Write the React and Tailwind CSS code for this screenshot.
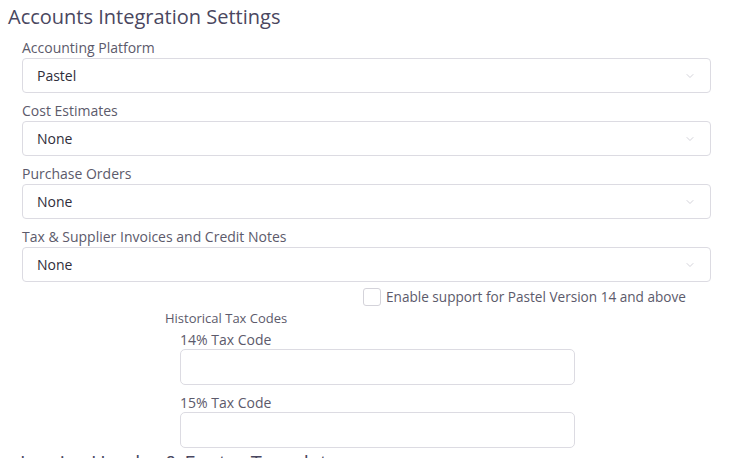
import { ChevronDown } from "lucide-react";

const SelectField = ({ label, value }) => (
  <div className="flex flex-col">
    <label className="h-[20px] text-[14px] leading-[20px] text-[#5c5a6b]">{label}</label>
    <div className="flex h-[35px] items-center justify-between rounded-[4px] border border-[#dcdbe2] bg-white pl-[14px] pr-[14px]">
      <span className="text-[14px] text-[#2f2d3a]">{value}</span>
      <ChevronDown className="h-[12px] w-[12px] text-[#c4c3cc]" strokeWidth={1.5} />
    </div>
  </div>
);

const TextField = ({ label }) => (
  <div className="flex flex-col">
    <label className="h-[19px] text-[14px] leading-[20px] text-[#5c5a6b]">{label}</label>
    <input className="h-[36px] w-[395px] rounded-[5px] border border-[#dcdbe2] bg-white outline-none" />
  </div>
);

export default function App() {
  return (
    <div
      className="h-[458px] overflow-hidden bg-white"
      style={{ fontFamily: '"Open Sans", "Liberation Sans", sans-serif' }}
    >
      <h2 className="pl-[8px] pt-[5px] text-[20px] leading-[24px] text-[#4a4760]">
        Accounts Integration Settings
      </h2>

      <div className="ml-[22px] mr-[23px] mt-[9px] flex flex-col gap-[8px]">
        <SelectField label="Accounting Platform" value="Pastel" />
        <SelectField label="Cost Estimates" value="None" />
        <SelectField label="Purchase Orders" value="None" />
        <SelectField label="Tax & Supplier Invoices and Credit Notes" value="None" />
      </div>

      <div className="mt-[6px] flex items-center pl-[363px]">
        <span className="h-[18px] w-[18px] rounded-[3px] border border-[#d4d3da] bg-white" />
        <span className="ml-[5px] text-[13.6px] leading-[18px] text-[#5c5a6b]">
          Enable support for Pastel Version 14 and above
        </span>
      </div>

      <div className="mt-[2px] pl-[165px]">
        <p className="text-[13px] leading-[20px] text-[#5c5a6b]">Historical Tax Codes</p>
        <div className="mt-[2px] flex flex-col gap-[8px] pl-[15px]">
          <TextField label="14% Tax Code" />
          <TextField label="15% Tax Code" />
        </div>
      </div>

      <h2 className="mt-[3px] pl-[20px] text-[20px] leading-[24px] text-[#4a4760]">
        Invoice Header &amp; Footer Templates
      </h2>
    </div>
  );
}
